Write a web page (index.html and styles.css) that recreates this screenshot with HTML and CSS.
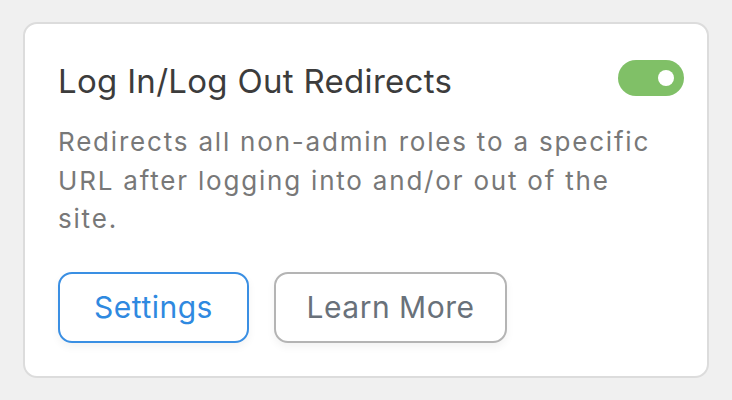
FILE: index.html
```html
<!DOCTYPE html>
<html lang="en">
<head>
    <meta charset="UTF-8">
    <meta name="viewport" content="width=device-width, initial-scale=1.0">
    <title>Log In/Log Out Redirects</title>
    <link rel="stylesheet" href="styles.css">
</head>
<body>
    <div class="card">
        <div class="card-header">
            <h2 class="card-title">Log In/Log Out Redirects</h2>
            <label class="toggle">
                <input type="checkbox" checked>
                <span class="toggle-track"></span>
            </label>
        </div>
        <p class="card-desc">Redirects all non-admin roles to a specific URL after logging into and/or out of the site.</p>
        <div class="card-actions">
            <button class="btn btn-primary">Settings</button>
            <button class="btn btn-secondary">Learn More</button>
        </div>
    </div>
</body>
</html>
```

FILE: styles.css
```css
body {
    font-family: Inter, "Noto Sans", sans-serif;
    background-color: #f0f0f0;
    margin: 0;
    padding: 22px 23px;
}
.card {
    width: 686px;
    height: 356px;
    box-sizing: border-box;
    background-color: white;
    border: 2px solid #dcdcdc;
    border-radius: 14px;
    padding: 37px 23px 0 33px;
}
.card-header {
    display: flex;
    justify-content: space-between;
    align-items: flex-start;
}
.card-title {
    margin: 0;
    font-size: 33px;
    line-height: 40px;
    font-weight: 400;
    letter-spacing: 0.3px;
    color: #3c3c3c;
}
.toggle {
    position: relative;
    display: block;
    width: 66px;
    height: 36px;
    margin-top: -1px;
}
.toggle input {
    display: none;
}
.toggle-track {
    position: absolute;
    inset: 0;
    background-color: #80c067;
    border-radius: 18px;
}
.toggle-track::after {
    content: "";
    position: absolute;
    top: 10px;
    right: 10px;
    width: 16px;
    height: 16px;
    border-radius: 50%;
    background-color: white;
}
.card-desc {
    max-width: 610px;
    margin: 22px 0 0;
    font-size: 26px;
    line-height: 38.5px;
    letter-spacing: 1.8px;
    color: #787878;
}
.card-actions {
    display: flex;
    gap: 25px;
    margin-top: 33px;
}
.btn {
    display: flex;
    align-items: center;
    justify-content: center;
    height: 71px;
    padding: 0;
    font-family: inherit;
    font-size: 30px;
    letter-spacing: 0.5px;
    white-space: nowrap;
    background-color: white;
    border: 2px solid #b4b4b4;
    border-radius: 14px;
    box-shadow: 0 4px 8px rgba(0, 0, 0, 0.05);
    cursor: pointer;
}
.btn-primary {
    width: 191px;
    color: #2f89e0;
    border-color: #3a8fe3;
}
.btn-secondary {
    width: 233px;
    color: #69717a;
}
```
